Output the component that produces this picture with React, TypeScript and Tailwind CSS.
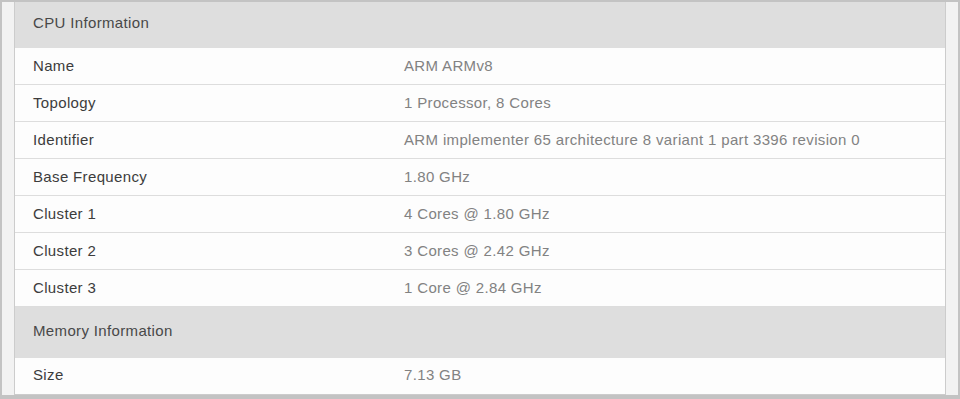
import React from "react";

type Row = { label: string; value: string };

const cpuRows: Row[] = [
  { label: "Name", value: "ARM ARMv8" },
  { label: "Topology", value: "1 Processor, 8 Cores" },
  { label: "Identifier", value: "ARM implementer 65 architecture 8 variant 1 part 3396 revision 0" },
  { label: "Base Frequency", value: "1.80 GHz" },
  { label: "Cluster 1", value: "4 Cores @ 1.80 GHz" },
  { label: "Cluster 2", value: "3 Cores @ 2.42 GHz" },
  { label: "Cluster 3", value: "1 Core @ 2.84 GHz" },
];

function InfoRow({ label, value, last }: Row & { last?: boolean }) {
  return (
    <div
      className={
        last
          ? "flex h-[36px] items-center pb-[2px] pl-[18px]"
          : "flex h-[37px] items-center border-b border-[#dddddd] pb-[1px] pl-[18px]"
      }
    >
      <div className="w-[371px] shrink-0 text-[#3c3c3c]">{label}</div>
      <div className="text-[#828282]">{value}</div>
    </div>
  );
}

export default function App() {
  return (
    <div
      className="box-border flex h-[399px] w-[960px] flex-col overflow-hidden border-x-2 border-t-2 border-b-4 border-[#c3c3c3] bg-[#f2f2f2] pl-[12px] pr-[12px] text-[15px] tracking-[0.35px] leading-[18px]"
      style={{ fontFamily: '"Liberation Sans", Arial, sans-serif' }}
    >
      <div className="flex flex-col border-x border-b border-[#cccccc] bg-[#fdfdfd]">
        <div className="flex h-[46px] items-center bg-[#dedede] pb-[5px] pl-[18px] text-[#484848]">
          CPU Information
        </div>
        {cpuRows.map((r) => (
          <InfoRow key={r.label} {...r} />
        ))}
        <div className="flex h-[51px] items-center bg-[#dedede] pb-[3px] pl-[18px] text-[#484848]">
          Memory Information
        </div>
        <InfoRow label="Size" value="7.13 GB" last />
      </div>
    </div>
  );
}
